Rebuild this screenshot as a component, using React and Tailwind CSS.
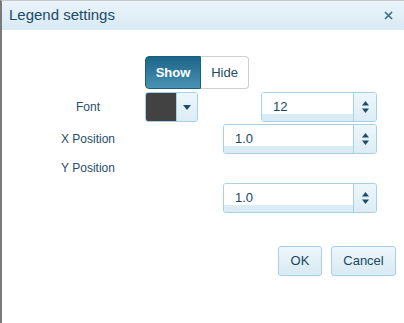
import React from "react";

const font = { fontFamily: '"Liberation Sans", Arial, sans-serif' };

function Arrows() {
  return (
    <svg width="9" height="14" viewBox="0 0 9 14" className="text-[#1c4d68]">
      <path d="M4.5 1 L8 5.5 L1 5.5 Z" fill="currentColor" />
      <path d="M4.5 13 L8 8.5 L1 8.5 Z" fill="currentColor" />
    </svg>
  );
}

function Spinner({ value, width }) {
  return (
    <div
      className={`flex h-[30px] ${width} rounded-[3px] border border-[#a6d0e3] overflow-hidden bg-white`}
    >
      <div className="flex-1 relative flex items-center pl-[11px] text-[13px] text-[#1a4760] bg-gradient-to-b from-white from-75% to-[#dcecf5] to-75%">
        {value}
      </div>
      <div className="w-[23px] border-l border-[#a6d0e3] bg-gradient-to-b from-[#eef6fa] to-[#dcecf5] flex items-center justify-center">
        <Arrows />
      </div>
    </div>
  );
}

function Label({ children }) {
  return (
    <div className="w-[96px] ml-[40px] text-center text-[12px] text-[#1f4e68]">
      {children}
    </div>
  );
}

export default function App() {
  return (
    <div
      className="w-[404px] h-[323px] bg-white border-l-2 border-l-[#7a7a7a] border-t border-t-[#c8c8c8] flex flex-col"
      style={font}
    >
      <div className="h-[29px] flex items-center justify-between pl-[7px] pr-[11px] bg-gradient-to-b from-[#eaf4fa] to-[#d8eaf4]">
        <span className="text-[15px] text-[#1d4a64]">Legend settings</span>
        <svg width="9" height="9" viewBox="0 0 9 9">
          <path d="M1 1 L8 8 M8 1 L1 8" stroke="#3d6e8a" strokeWidth="1.7" />
        </svg>
      </div>

      <div className="flex flex-col pt-[26px] -ml-[2px]">
        <div className="flex ml-[145px] h-[33px]">
          <div className="w-[56px] flex items-center justify-center rounded-l-[4px] border border-[#1a5e80] bg-gradient-to-b from-[#1c6589] to-[#4993b3] text-white font-bold text-[13px]">
            Show
          </div>
          <div className="w-[48px] flex items-center justify-center rounded-r-[4px] border border-l-0 border-[#cfcfcf] bg-white text-[#1d4a64] text-[13px]">
            Hide
          </div>
        </div>

        <div className="flex items-center h-[30px] mt-[3px]">
          <Label>Font</Label>
          <div className="ml-[9px] flex h-[30px] w-[53px] rounded-[3px] border border-[#a6d0e3] overflow-hidden">
            <div className="w-[30px] bg-[#424242]" />
            <div className="flex-1 flex items-center justify-center border-l border-[#a6d0e3] bg-gradient-to-b from-[#eef6fa] to-[#dcecf5]">
              <svg width="8" height="5" viewBox="0 0 8 5">
                <path d="M0 0 H8 L4 5 Z" fill="#1c4d68" />
              </svg>
            </div>
          </div>
          <div className="ml-[63px]">
            <Spinner value="12" width="w-[116px]" />
          </div>
        </div>

        <div className="flex items-center h-[30px] mt-[2px]">
          <Label>X Position</Label>
          <div className="ml-[87px]">
            <Spinner value="1.0" width="w-[154px]" />
          </div>
        </div>

        <div className="flex items-center h-[30px] mt-[-1px]">
          <Label>Y Position</Label>
        </div>

        <div className="flex h-[30px] ml-[223px]">
          <Spinner value="1.0" width="w-[154px]" />
        </div>

        <div className="flex justify-end gap-[9px] mt-[33px] pr-[8px]">
          <div className="w-[44px] h-[30px] flex items-center justify-center rounded-[3px] border border-[#a6d0e3] bg-gradient-to-b from-[#eef6fa] to-[#d8eaf4] text-[13px] text-[#1a4760]">
            OK
          </div>
          <div className="w-[65px] h-[30px] flex items-center justify-center rounded-[3px] border border-[#a6d0e3] bg-gradient-to-b from-[#eef6fa] to-[#d8eaf4] text-[13px] text-[#1a4760]">
            Cancel
          </div>
        </div>
      </div>
    </div>
  );
}
